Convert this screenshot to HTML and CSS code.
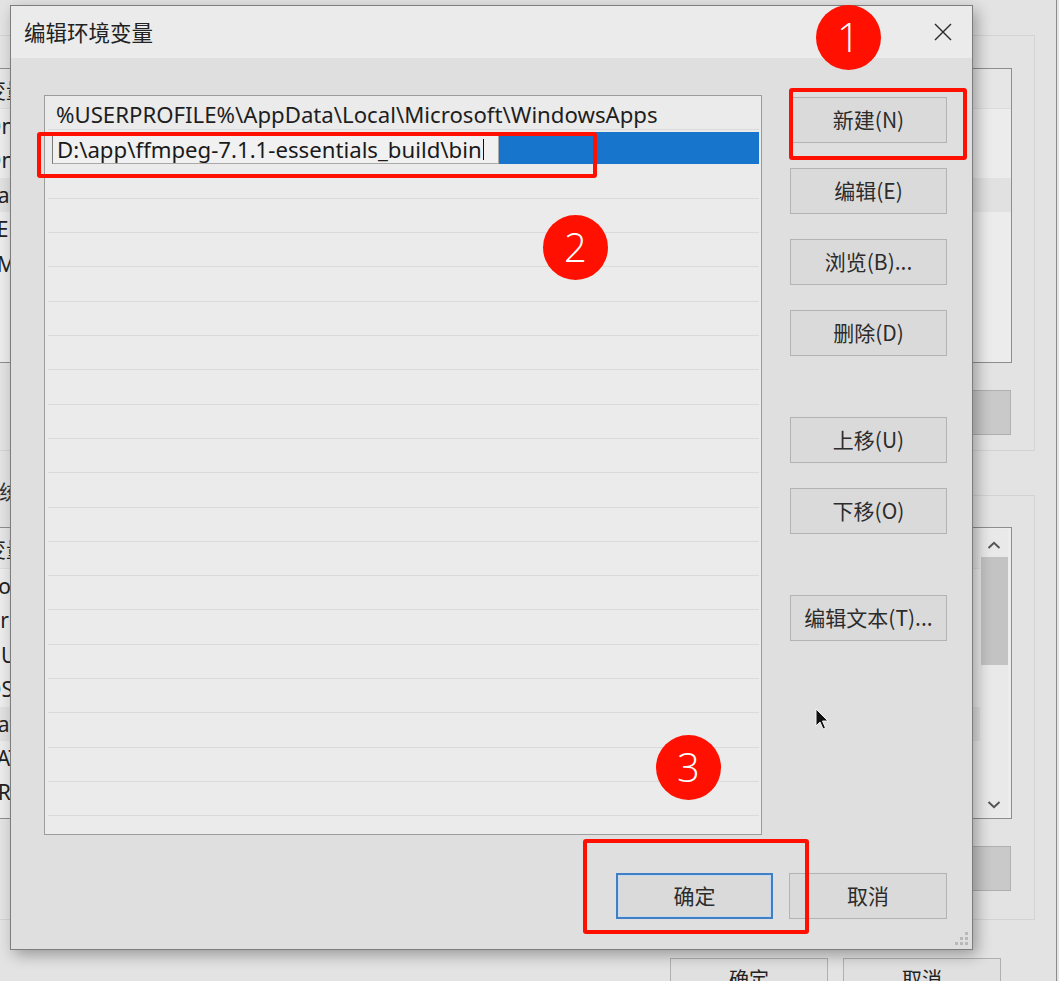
FILE: index.html
```html
<!DOCTYPE html>
<html lang="zh-CN">
<head>
<meta charset="utf-8">
<title>编辑环境变量</title>
<link rel="stylesheet" href="styles.css">
</head>
<body>
<div class="screen">

  <!-- background window: 环境变量 -->
  <div class="bgwin">
    <div class="group group-user">
      <div class="bglist bglist-user">
        <div class="bgrow bghead">变量</div>
        <div class="bgrow">OneDrive</div>
        <div class="bgrow">OneDriveConsumer</div>
        <div class="bgrow bgsel">Path</div>
        <div class="bgrow">TEMP</div>
        <div class="bgrow">TMP</div>
      </div>
      <div class="bgbtns">
        <div class="bgbtn">新建(N)...</div>
        <div class="bgbtn">编辑(E)...</div>
        <div class="bgbtn bgbtn-dark">删除(D)</div>
      </div>
    </div>
    <div class="grouplabel">系统变量(S)</div>
    <div class="group group-sys">
      <div class="bglist bglist-sys">
        <div class="bgcol">
          <div class="bgrow bghead">变量</div>
          <div class="bgrow">ComSpec</div>
          <div class="bgrow">DriverData</div>
          <div class="bgrow">NUMBER_OF_PROCESSORS</div>
          <div class="bgrow">OS</div>
          <div class="bgrow bgsel">Path</div>
          <div class="bgrow">PATHEXT</div>
          <div class="bgrow">PROCESSOR_ARCHITECTURE</div>
          <div class="bgrow">PROCESSOR_IDENTIFIER</div>
        </div>
        <div class="scrollbar">
          <svg class="sarrow" width="14" height="8" viewBox="0 0 14 8"><path d="M1.5 7 L7 1.8 L12.5 7" fill="none" stroke="#555" stroke-width="2"/></svg>
          <div class="sthumb"></div>
          <div class="sspace"></div>
          <svg class="sarrow" width="14" height="8" viewBox="0 0 14 8"><path d="M1.5 1 L7 6.2 L12.5 1" fill="none" stroke="#555" stroke-width="2"/></svg>
        </div>
      </div>
      <div class="bgbtns">
        <div class="bgbtn">新建(W)...</div>
        <div class="bgbtn">编辑(I)...</div>
        <div class="bgbtn bgbtn-dark">删除(L)</div>
      </div>
    </div>
    <div class="bgfooter">
      <div class="bgbtn">确定</div>
      <div class="bgbtn">取消</div>
    </div>
  </div>

  <!-- foreground dialog -->
  <div class="dialog">
    <div class="titlebar">
      <span class="title">编辑环境变量</span>
      <span class="close">
        <svg width="18" height="18" viewBox="0 0 18 18"><path d="M1 1 L17 17 M17 1 L1 17" stroke="#2a2a2a" stroke-width="1.4" fill="none"/></svg>
      </span>
    </div>
    <div class="content">
      <div class="list">
        <div class="row">%USERPROFILE%\AppData\Local\Microsoft\WindowsApps</div>
        <div class="row selected">
          <div class="edit">D:\app\ffmpeg-7.1.1-essentials_build\bin<span class="caret"></span></div>
          <div class="selfill"></div>
        </div>
        <div class="row"></div><div class="row"></div><div class="row"></div><div class="row"></div>
        <div class="row"></div><div class="row"></div><div class="row"></div><div class="row"></div>
        <div class="row"></div><div class="row"></div><div class="row"></div><div class="row"></div>
        <div class="row"></div><div class="row"></div><div class="row"></div><div class="row"></div>
        <div class="row"></div><div class="row"></div><div class="row"></div>
      </div>
      <div class="side">
        <div class="btn">新建(N)</div>
        <div class="btn gap1">编辑(E)</div>
        <div class="btn gap1">浏览(B)...</div>
        <div class="btn gap1">删除(D)</div>
        <div class="btn gap2">上移(U)</div>
        <div class="btn gap1">下移(O)</div>
        <div class="btn gap2">编辑文本(T)...</div>
      </div>
    </div>
    <div class="footer">
      <div class="btn default">确定</div>
      <div class="btn">取消</div>
    </div>
    <svg class="grip" width="14" height="14" viewBox="0 0 14 14">
      <g fill="#b8b8b8">
        <rect x="10" y="0" width="3" height="3"/>
        <rect x="5" y="5" width="3" height="3"/><rect x="10" y="5" width="3" height="3"/>
        <rect x="0" y="10" width="3" height="3"/><rect x="5" y="10" width="3" height="3"/><rect x="10" y="10" width="3" height="3"/>
      </g>
    </svg>
  </div>

  <!-- mouse pointer -->
  <svg class="pointer" width="16" height="24" viewBox="0 0 16 24">
    <path d="M1 1 L1 18 L5 14 L8 21 L10.5 20 L7.5 13 L13 13 Z" fill="#111" stroke="#f4f4f4" stroke-width="1"/>
  </svg>

  <!-- red annotations -->
  <div class="mark mark-new"></div>
  <div class="mark mark-edit"></div>
  <div class="mark mark-ok"></div>
  <div class="badge badge-1">1</div>
  <div class="badge badge-2">2</div>
  <div class="badge badge-3">3</div>
</div>
</body>
</html>
```

FILE: styles.css
```css
* { box-sizing: border-box; }
html, body { margin: 0; padding: 0; }
body {
  width: 1059px;
  height: 981px;
  overflow: hidden;
  background: #e4e4e4;
  font-family: "Noto Sans", "Noto Sans CJK SC", sans-serif;
  color: #222;
}
.screen {
  position: relative;
  width: 1059px;
  height: 981px;
  overflow: hidden;
}

/* ---------- background window ---------- */
.bgwin {
  position: absolute;
  left: -300px;
  top: 0;
  width: 1357px;
  height: 1020px;
  background: #e3e3e3;
  border-right: 1px solid #8c8c8c;
  padding: 35px 21px 0 20px;
  display: flex;
  flex-direction: column;
}
.group {
  border: 1px solid #d3d3d3;
  padding: 32px 22px 0 20px;
  display: flex;
  flex-direction: column;
}
.group-user { height: 416px; }
.grouplabel {
  height: 44px;
  padding: 30px 0 0 259px;
  font-family: "Noto Sans CJK SC", sans-serif;
  font-size: 20px;
  line-height: 22px;
  color: #333;
  white-space: nowrap;
}
.group-sys {
  height: 425px;
  padding-top: 31px;
}
.bglist {
  background: #ececec;
  border: 1px solid #8e8e8e;
  font-size: 21px;
  color: #222;
  overflow: hidden;
}
.bglist-user { height: 295px; }
.bglist-sys { height: 292px; display: flex; }
.bgcol { flex: 1; }
.bgrow {
  height: 34.4px;
  line-height: 34px;
  padding-left: 243px;
  white-space: nowrap;
}
.bghead {
  height: 40px;
  line-height: 40px;
  background: #e6e6e6;
  border-bottom: 1px solid #dcdcdc;
  font-family: "Noto Sans CJK SC", sans-serif;
}
.bglist-sys .bghead { height: 41px; }
.bgsel { background: #e1e1e1; }
.scrollbar {
  width: 28px;
  margin: 1px 3px 1px 0;
  background: #e9e9e9;
  display: flex;
  flex-direction: column;
  align-items: center;
}
.sarrow { margin: 12px 0 8px; flex: none; }
.sthumb { width: 27px; height: 108px; background: #c3c3c3; flex: none; }
.sspace { flex: 1; }
.bgbtns {
  display: flex;
  justify-content: flex-end;
  gap: 16px;
  margin-top: 27px;
  margin-right: 1px;
}
.bgbtn {
  width: 158px;
  height: 45px;
  background: #e0e0e0;
  border: 1px solid #b0b0b0;
  font-family: "Noto Sans CJK SC", sans-serif;
  font-size: 20px;
  line-height: 43px;
  text-align: center;
  color: #222;
}
.bgbtn-dark { background: #c9c9c9; width: 39px; overflow: hidden; color: transparent; }
.bgfooter {
  display: flex;
  justify-content: flex-end;
  gap: 15px;
  margin-top: 38px;
  margin-right: 34px;
}
.bgfooter .bgbtn { height: 50px; line-height: 40px; }

/* ---------- dialog ---------- */
.dialog {
  position: absolute;
  left: 10px;
  top: 5px;
  width: 963px;
  height: 945px;
  border: 1px solid #7d7d7d;
  background: #dfdfdf;
  box-shadow: 4px 5px 14px rgba(0, 0, 0, 0.32);
  display: flex;
  flex-direction: column;
}
.titlebar {
  height: 52px;
  flex: none;
  background: #ebebeb;
  display: flex;
  align-items: center;
  justify-content: space-between;
  padding-left: 13px;
}
.title {
  font-family: "Noto Sans CJK SC", sans-serif;
  font-size: 21.5px;
  color: #222;
  padding-bottom: 2px;
}
.close {
  width: 58px;
  height: 52px;
  display: flex;
  align-items: center;
  justify-content: center;
}
.content {
  display: flex;
  padding: 37px 25px 0 33px;
}
.list {
  width: 718px;
  height: 740px;
  border: 1px solid #9c9c9c;
  background: #ebebeb;
  overflow: hidden;
}
.row {
  height: 34.3px;
  margin: 0 2px 0 3px;
  border-bottom: 1px solid #dadada;
  font-size: 22.2px;
  line-height: 38px;
  padding-left: 8px;
  white-space: nowrap;
  color: #1e1e1e;
}
.row.selected {
  display: flex;
  align-items: flex-end;
  border-bottom: 0;
  padding: 0 0 0 4px;
}
.selfill {
  flex: 1;
  height: 32px;
  margin-bottom: 1px;
  background: #1775cb;
}
.edit {
  width: 447px;
  height: 29px;
  margin-bottom: 1px;
  background: #f1f1f1;
  border: 1px solid #7a7a7a;
  border-bottom-color: #a9a9a9;
  border-right-color: #a9a9a9;
  padding-left: 4px;
  font-size: 22.2px;
  line-height: 27px;
  color: #1a1a1a;
  white-space: nowrap;
  display: flex;
  align-items: center;
}
.caret {
  display: inline-block;
  width: 1.5px;
  height: 21px;
  background: #111;
  margin-left: 1px;
}
.side {
  width: 157px;
  margin-left: 28px;
  padding-top: 2px;
  display: flex;
  flex-direction: column;
}
.btn {
  height: 46px;
  width: 157px;
  flex: none;
  background: #dadada;
  border: 1px solid #b3b3b3;
  font-family: "Noto Sans CJK SC", sans-serif;
  font-size: 21px;
  line-height: 43px;
  text-align: center;
  color: #2c2c2c;
}
.gap1 { margin-top: 25px; }
.gap2 { margin-top: 61px; }
.footer {
  display: flex;
  justify-content: flex-end;
  gap: 16px;
  padding: 38px 25px 0 0;
}
.footer .btn { width: 158px; }
.footer .btn.default {
  width: 157px;
  border: 2px solid #3f7fc6;
  box-shadow: inset 0 0 0 1px #c6d9ee;
  line-height: 41px;
}
.grip {
  position: absolute;
  right: 3px;
  bottom: 3px;
}

/* ---------- pointer ---------- */
.pointer {
  position: absolute;
  left: 815px;
  top: 708px;
}

/* ---------- annotations ---------- */
.mark {
  position: absolute;
  border: 4px solid #ff1000;
  border-radius: 3px;
}
.mark-new { left: 789px; top: 88px; width: 178px; height: 72px; }
.mark-edit { left: 37px; top: 132px; width: 560px; height: 46px; }
.mark-ok { left: 583px; top: 839px; width: 226px; height: 95px; }
.badge {
  position: absolute;
  width: 65px;
  height: 65px;
  border-radius: 50%;
  background: #ff1000;
  color: #fff;
  font-family: "Open Sans", "Noto Sans", sans-serif;
  font-weight: 300;
  font-size: 40px;
  line-height: 64px;
  text-align: center;
}
.badge-1 { left: 816px; top: 5px; }
.badge-2 { left: 543px; top: 215px; }
.badge-3 { left: 656px; top: 735px; }
```
